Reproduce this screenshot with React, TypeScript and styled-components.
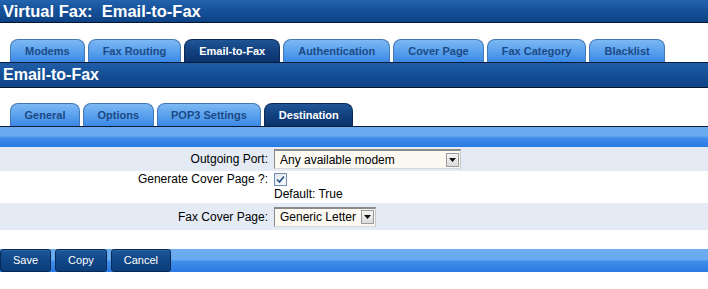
import styled, { createGlobalStyle } from "styled-components";

const GlobalStyle = createGlobalStyle`
  html, body {
    margin: 0;
    padding: 0;
    background: #ffffff;
    font-family: "Liberation Sans", Arial, sans-serif;
  }
`;

const Page = styled.div`
  width: 708px;
  display: flex;
  flex-direction: column;
`;

const TitleBar = styled.div`
  height: 22px;
  border-bottom: 1px solid #05152e;
  background: linear-gradient(to bottom, #2363ad 0%, #165299 45%, #0d4285 100%);
  color: #ffffff;
  font-size: 16.5px;
  font-weight: bold;
  line-height: 22px;
  padding-left: 3px;
  white-space: pre;
`;

const TabStrip = styled.div<{ $top: number }>`
  display: flex;
  align-items: flex-end;
  gap: 3px;
  padding: ${(p) => p.$top}px 0 0 10px;
  border-bottom: 1px solid #071a38;
`;

const Tab = styled.div<{ $active?: boolean; $pad: number }>`
  height: 21px;
  padding: 1px ${(p) => p.$pad}px 0;
  border: 1px solid ${(p) => (p.$active ? "#0a2a55" : "#4277b8")};
  border-bottom: none;
  border-radius: 8px 8px 0 0;
  background: ${(p) =>
    p.$active
      ? "linear-gradient(to bottom, #1f5697 0%, #113f7d 55%, #0a346d 100%)"
      : "linear-gradient(to bottom, #7db8f3 0%, #5ba2ee 50%, #3a88e6 100%)"};
  color: ${(p) => (p.$active ? "#ffffff" : "#1c4a85")};
  font-size: 11px;
  font-weight: bold;
  line-height: 20px;
  white-space: nowrap;
`;

const SectionBar = styled.div`
  height: 24px;
  border-bottom: 1px solid #05152e;
  background: linear-gradient(to bottom, #1f5ea8 0%, #155097 45%, #0d4285 100%);
  color: #ffffff;
  font-size: 16px;
  font-weight: bold;
  line-height: 24px;
  padding-left: 3px;
`;

const LightBar = styled.div<{ $height: number }>`
  height: ${(p) => p.$height}px;
  background: linear-gradient(
    to bottom,
    #6caced 0%,
    #67aaf0 45%,
    #3f8ce9 55%,
    #2b7ae1 100%
  );
`;

const Form = styled.div`
  display: flex;
  flex-direction: column;
`;

const Row = styled.div<{ $shaded?: boolean; $height: number; $top?: boolean }>`
  height: ${(p) => p.$height}px;
  display: grid;
  grid-template-columns: 268px 1fr;
  column-gap: 6px;
  align-items: ${(p) => (p.$top ? "start" : "center")};
  background: ${(p) => (p.$shaded ? "#e4ebf5" : "#ffffff")};
  font-size: 12px;
  color: #000000;
`;

const Label = styled.div<{ $pad?: number }>`
  text-align: right;
  padding-top: ${(p) => p.$pad ?? 0}px;
  white-space: nowrap;
`;

const FieldStack = styled.div`
  display: flex;
  flex-direction: column;
  align-items: flex-start;
  gap: 1px;
  padding-top: 2px;
`;

const FakeSelect = styled.div<{ $width: number }>`
  width: ${(p) => p.$width}px;
  height: 20px;
  box-sizing: border-box;
  display: flex;
  align-items: center;
  justify-content: space-between;
  background: #fbf9f1;
  border-top: 2px solid #8a8a8a;
  border-left: 1px solid #8a8a8a;
  border-right: 1px solid #c8c8c8;
  border-bottom: 1px solid #d8d8d8;
  padding: 0 1px 0 5px;
  font-size: 12px;
  color: #000;
`;

const ArrowButton = styled.div`
  width: 13px;
  height: 14px;
  box-sizing: border-box;
  display: flex;
  align-items: center;
  justify-content: center;
  border: 1px solid #9a9a9a;
  background: linear-gradient(to bottom, #f4f4f4, #dcdcdc);
`;

const Check = styled.div`
  width: 13px;
  height: 13px;
  box-sizing: border-box;
  border: 1px solid #6f8eb5;
  background: linear-gradient(to bottom right, #dde6f0, #fdfdfd);
  display: flex;
  align-items: center;
  justify-content: center;
`;

const Spacer = styled.div<{ $h: number }>`
  height: ${(p) => p.$h}px;
`;

const ButtonBar = styled.div`
  height: 23px;
  display: flex;
  gap: 4px;
  background: linear-gradient(
    to bottom,
    #6caced 0%,
    #67aaf0 45%,
    #3f8ce9 55%,
    #2b7ae1 100%
  );
`;

const Button = styled.button`
  height: 23px;
  padding: 0 12px;
  margin: 0;
  border: 1px solid #072a55;
  border-radius: 3px;
  box-shadow: inset 0 1px 0 #2c66a8;
  background: linear-gradient(to bottom, #1a5798 0%, #104686 55%, #0c3d79 100%);
  color: #ffffff;
  font-family: "Liberation Sans", Arial, sans-serif;
  font-size: 11px;
  line-height: 21px;
  cursor: pointer;
`;

const DownArrow = () => (
  <svg width="7" height="4" viewBox="0 0 7 4">
    <path d="M0 0 H7 L3.5 4 Z" fill="#111" />
  </svg>
);

const mainTabs = [
  "Modems",
  "Fax Routing",
  "Email-to-Fax",
  "Authentication",
  "Cover Page",
  "Fax Category",
  "Blacklist",
];

const subTabs = ["General", "Options", "POP3 Settings", "Destination"];

export default function App() {
  return (
    <Page>
      <GlobalStyle />
      <TitleBar>{"Virtual Fax:  Email-to-Fax"}</TitleBar>
      <TabStrip $top={16}>
        {mainTabs.map((t) => (
          <Tab key={t} $pad={14} $active={t === "Email-to-Fax"}>
            {t}
          </Tab>
        ))}
      </TabStrip>
      <SectionBar>Email-to-Fax</SectionBar>
      <TabStrip $top={15}>
        {subTabs.map((t) => (
          <Tab key={t} $pad={13.5} $active={t === "Destination"}>
            {t}
          </Tab>
        ))}
      </TabStrip>
      <LightBar $height={20} />
      <Form>
        <Row $shaded $height={24}>
          <Label>Outgoing Port:</Label>
          <FakeSelect $width={187}>
            <span>Any available modem</span>
            <ArrowButton>
              <DownArrow />
            </ArrowButton>
          </FakeSelect>
        </Row>
        <Row $height={32} $top>
          <Label $pad={1}>Generate Cover Page ?:</Label>
          <FieldStack>
            <Check>
              <svg width="9" height="9" viewBox="0 0 9 9">
                <path
                  d="M1 4.5 L3.5 7 L8 1.5"
                  fill="none"
                  stroke="#2a4f86"
                  strokeWidth="1.6"
                />
              </svg>
            </Check>
            <span>Default: True</span>
          </FieldStack>
        </Row>
        <Row $shaded $height={27}>
          <Label>Fax Cover Page:</Label>
          <FakeSelect $width={102}>
            <span>Generic Letter</span>
            <ArrowButton>
              <DownArrow />
            </ArrowButton>
          </FakeSelect>
        </Row>
      </Form>
      <Spacer $h={19} />
      <ButtonBar>
        <Button>Save</Button>
        <Button>Copy</Button>
        <Button>Cancel</Button>
      </ButtonBar>
    </Page>
  );
}
